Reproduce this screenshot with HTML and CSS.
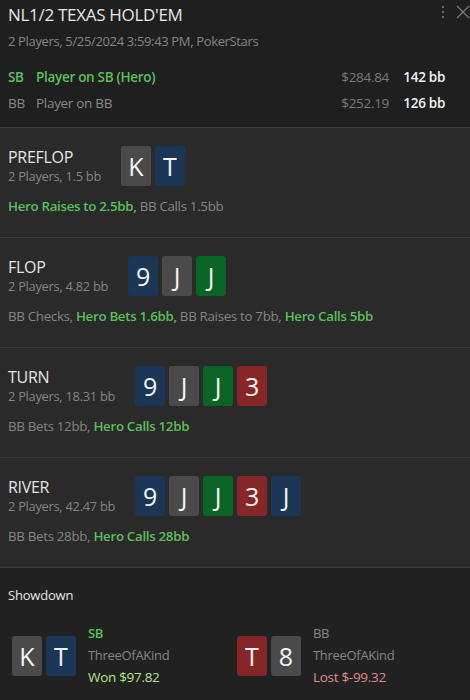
FILE: index.html
```
<!DOCTYPE html>
<html>
<head>
<meta charset="utf-8">
<link rel="stylesheet" href="styles.css">
</head>
<body>
<div class="app">
  <header class="header">
    <div class="title-row">
      <div class="title">NL1/2 TEXAS HOLD'EM</div>
      <div class="tools">
        <svg class="dots" width="4" height="14" viewBox="0 0 4 14"><circle cx="2" cy="2" r="1.2" fill="#6a6a6a"/><circle cx="2" cy="7" r="1.2" fill="#6a6a6a"/><circle cx="2" cy="12" r="1.2" fill="#6a6a6a"/></svg>
        <svg class="close" width="14" height="14" viewBox="0 0 14 14"><path d="M1 1L13 13M13 1L1 13" stroke="#7a7a7a" stroke-width="1.3"/></svg>
      </div>
    </div>
    <div class="subtitle">2 Players, 5/25/2024 3:59:43 PM, PokerStars</div>
    <div class="players">
      <div class="player hero">
        <span class="pos">SB</span><span class="name">Player on SB (Hero)</span>
        <span class="money">$284.84</span><span class="bb">142 bb</span>
      </div>
      <div class="player">
        <span class="pos">BB</span><span class="name">Player on BB</span>
        <span class="money">$252.19</span><span class="bb">126 bb</span>
      </div>
    </div>
  </header>

  <section class="street">
    <div class="street-top">
      <div class="street-info">
        <div class="street-name">PREFLOP</div>
        <div class="street-sub">2 Players, 1.5 bb</div>
      </div>
      <div class="cards">
        <span class="card gray">K</span><span class="card blue">T</span>
      </div>
    </div>
    <div class="actions"><b class="hero-act">Hero Raises to 2.5bb,</b> BB Calls 1.5bb</div>
  </section>

  <section class="street">
    <div class="street-top">
      <div class="street-info">
        <div class="street-name">FLOP</div>
        <div class="street-sub">2 Players, 4.82 bb</div>
      </div>
      <div class="cards">
        <span class="card blue">9</span><span class="card gray">J</span><span class="card green">J</span>
      </div>
    </div>
    <div class="actions">BB Checks, <b class="hero-act">Hero Bets 1.6bb,</b> BB Raises to 7bb, <b class="hero-act">Hero Calls 5bb</b></div>
  </section>

  <section class="street">
    <div class="street-top">
      <div class="street-info">
        <div class="street-name">TURN</div>
        <div class="street-sub">2 Players, 18.31 bb</div>
      </div>
      <div class="cards">
        <span class="card blue">9</span><span class="card gray">J</span><span class="card green">J</span><span class="card red">3</span>
      </div>
    </div>
    <div class="actions">BB Bets 12bb, <b class="hero-act">Hero Calls 12bb</b></div>
  </section>

  <section class="street">
    <div class="street-top">
      <div class="street-info">
        <div class="street-name">RIVER</div>
        <div class="street-sub">2 Players, 42.47 bb</div>
      </div>
      <div class="cards">
        <span class="card blue">9</span><span class="card gray">J</span><span class="card green">J</span><span class="card red">3</span><span class="card blue">J</span>
      </div>
    </div>
    <div class="actions">BB Bets 28bb, <b class="hero-act">Hero Calls 28bb</b></div>
  </section>

  <section class="showdown">
    <div class="sd-title">Showdown</div>
    <div class="sd-row">
      <div class="sd-player">
        <div class="cards">
          <span class="card gray">K</span><span class="card blue">T</span>
        </div>
        <div class="sd-info">
          <div class="sd-pos hero-pos">SB</div>
          <div class="sd-hand">ThreeOfAKind</div>
          <div class="sd-result won">Won $97.82</div>
        </div>
      </div>
      <div class="sd-player">
        <div class="cards">
          <span class="card red">T</span><span class="card gray">8</span>
        </div>
        <div class="sd-info">
          <div class="sd-pos">BB</div>
          <div class="sd-hand">ThreeOfAKind</div>
          <div class="sd-result lost">Lost $-99.32</div>
        </div>
      </div>
    </div>
  </section>
</div>
</body>
</html>
```
FILE: styles.css
```
* { box-sizing: border-box; }
html, body { margin: 0; padding: 0; }
body {
  background: #202120;
  font-family: "Open Sans", "Noto Sans", sans-serif;
  color: #8a8a8a;
  width: 470px;
  height: 700px;
  overflow: hidden;
}
.header {
  background: #1e1f1e;
  padding: 2px 8px 0 8px;
  height: 128px;
  border-bottom: 1px solid #3a3b3a;
}
.title-row {
  display: flex;
  justify-content: space-between;
  align-items: flex-start;
}
.title {
  font-size: 17px;
  color: #e6e6e6;
  line-height: 26px;
  letter-spacing: -0.3px;
}
.tools {
  display: flex;
  gap: 11px;
  align-items: center;
  padding-top: 3px;
  margin-right: -8px;
}
.subtitle {
  font-size: 13px;
  color: #858585;
  margin-top: 5px;
  line-height: 17px;
  letter-spacing: -0.35px;
}
.players {
  margin-top: 18px;
  display: flex;
  flex-direction: column;
  gap: 8px;
}
.player {
  display: flex;
  align-items: center;
  font-size: 13.5px;
  line-height: 18px;
  letter-spacing: -0.3px;
}
.pos { width: 28px; color: #8a8a8a; }
.name { flex: 1; color: #8a8a8a; }
.player.hero .pos, .player.hero .name { color: #5cbf5c; font-weight: 600; }
.money { color: #7a7a7a; margin-right: 12px; }
.bb { color: #f2f2f2; font-weight: 600; width: 44px; text-align: right; margin-right: 17px; }

.street {
  background: #292a29;
  height: 110px;
  border-bottom: 1px solid #3a3b3a;
  padding: 18px 8px 0 8px;
}
.street-top {
  display: flex;
  align-items: flex-start;
  gap: 20px;
}
.street-info { padding-top: 1px; }
.street-name {
  font-size: 16px;
  color: #e6e6e6;
  line-height: 21px;
  letter-spacing: -0.3px;
}
.street-sub {
  font-size: 12.8px;
  color: #858585;
  line-height: 16px;
  letter-spacing: -0.25px;
}
.cards { display: flex; gap: 4px; }
.card {
  width: 30px;
  height: 40px;
  border-radius: 3px;
  display: flex;
  align-items: center;
  justify-content: center;
  font-size: 25px;
  color: #f4f4f4;
  font-family: "Open Sans", sans-serif;
}
.card.gray { background: #4a4a4a; }
.card.blue { background: #1b3656; }
.card.green { background: #0c6326; }
.card.red { background: #862628; }
.actions {
  margin-top: 12px;
  font-size: 13.3px;
  color: #858585;
  letter-spacing: -0.3px;
  line-height: 17px;
}
.hero-act { color: #5cbf5c; font-weight: 600; }

.showdown {
  background: #202120;
  padding: 18px 8px 0 8px;
}
.sd-title {
  font-size: 13px;
  color: #e6e6e6;
  line-height: 18px;
  letter-spacing: -0.2px;
}
.sd-row {
  display: flex;
  margin-top: 21px;
}
.sd-player {
  display: flex;
  align-items: center;
  gap: 12px;
  width: 225px;
  padding-left: 4px;
}
.sd-info {
  display: flex;
  flex-direction: column;
  gap: 5px;
  font-size: 13px;
  line-height: 17px;
  letter-spacing: -0.3px;
}
.sd-pos { color: #858585; }
.sd-pos.hero-pos { color: #5cbf5c; font-weight: 600; }
.sd-hand { color: #858585; }
.sd-result { font-size: 13.5px; font-weight: 500; }
.won { color: #b4e48c; }
.lost { color: #e28a8a; }
```
